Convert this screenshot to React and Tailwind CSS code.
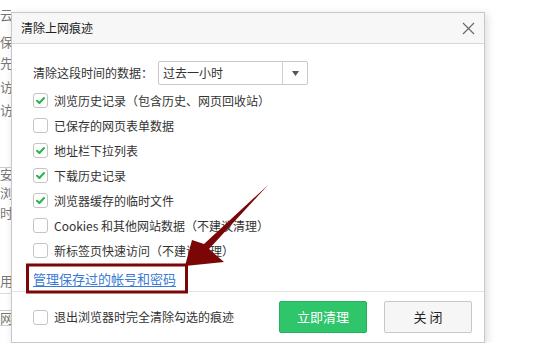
import React from 'react';

const FONT = { fontFamily: '"Noto Sans CJK SC", "Microsoft YaHei", sans-serif' };

const options = [
  { label: '浏览历史记录（包含历史、网页回收站）', checked: true },
  { label: '已保存的网页表单数据', checked: false },
  { label: '地址栏下拉列表', checked: true },
  { label: '下载历史记录', checked: true },
  { label: '浏览器缓存的临时文件', checked: true },
  { label: 'Cookies 和其他网站数据（不建议清理）', checked: false },
  { label: '新标签页快速访问（不建议清理）', checked: false },
];

const Checkbox = ({ checked }) => (
  <span className="flex items-center justify-center w-[15px] h-[15px] rounded-[3px] border border-[#c4c4c4] bg-white shrink-0">
    {checked && (
      <svg width="11" height="11" viewBox="0 0 11 11">
        <path d="M2 5.8 L4.4 8 L9 3" fill="none" stroke="#22b64c" strokeWidth="2" strokeLinecap="round" strokeLinejoin="round" />
      </svg>
    )}
  </span>
);

// background settings page: only its left edge shows beside the dialog
const bgRows = [
  { text: '云', cls: 'mt-[5px]' },
  { text: '保', cls: 'mt-[7px]' },
  { text: '先', cls: 'mt-[1px]' },
  { text: '访', cls: 'mt-[4px]' },
  { text: '访', cls: 'mt-[3px]' },
];

export default function App() {
  return (
    <div className="relative w-[536px] h-[343px] overflow-hidden bg-white text-[12px] text-[#333]" style={FONT}>
      {/* background page */}
      <div className="flex flex-col w-[11px] overflow-hidden text-[13px] text-[#777]">
        {bgRows.map((r, i) => (
          <div key={i} className={`h-[20px] flex items-center ${r.cls}`}>{r.text}</div>
        ))}
        <div className="h-[14px] mt-[47px] border-y border-[#ccc] flex items-center">安</div>
        <div className="h-[20px] mt-[2px] flex items-center">浏</div>
        <div className="h-[20px] flex items-center">时</div>
        <div className="h-[20px] mt-[48px] flex items-center">用</div>
        <div className="h-px bg-[#ddd] mt-[2px]" />
        <div className="h-[16px] mt-[16px] border-y border-[#ccc] flex items-center">网</div>
      </div>

      {/* dialog */}
      <div className="absolute left-[11px] top-[12px] w-[474px] h-[331px] bg-white border border-[#c8c8c8] shadow-[2px_2px_8px_rgba(0,0,0,0.15)] flex flex-col">
        <div className="h-[31px] shrink-0 bg-[#f7f7f7] border-b border-[#d8d8d8] flex items-center justify-between pl-[9px] pr-[9px]">
          <span className="text-[12px] text-[#222]">清除上网痕迹</span>
          <svg width="13" height="13" viewBox="0 0 13 13">
            <path d="M1 1 L12 12 M12 1 L1 12" stroke="#666" strokeWidth="1.1" fill="none" />
          </svg>
        </div>

        <div className="flex flex-col pl-[21px] pt-[17px]">
          <div className="flex items-center h-[24px]">
            <span className="w-[125px]">清除这段时间的数据：</span>
            <div className="flex h-[24px] w-[150px] border border-[#c8c8c8] rounded-[2px]">
              <span className="flex-1 flex items-center pl-[4px] text-[12px]">过去一小时</span>
              <span className="w-[25px] border-l border-[#d0d0d0] flex items-center justify-center">
                <svg width="7" height="5" viewBox="0 0 7 5"><path d="M0 0 H7 L3.5 5 Z" fill="#555" /></svg>
              </span>
            </div>
          </div>

          <div className="flex flex-col mt-[3px]">
            {options.map((o, i) => (
              <label key={i} className="flex items-center h-[25px] gap-[6px]">
                <Checkbox checked={o.checked} />
                <span>{o.label}</span>
              </label>
            ))}
          </div>

          <div className="h-[25px] mt-[3px] flex items-center">
            <span className="text-[13px] text-[#3a7bd5] underline underline-offset-2">管理保存过的帐号和密码</span>
          </div>
        </div>

        <div className="border-t border-[#e2e2e2] flex items-center pl-[21px] pr-[12px] pt-[9px] pb-[7px]">
          <label className="flex items-center gap-[6px] flex-1">
            <Checkbox checked={false} />
            <span>退出浏览器时完全清除勾选的痕迹</span>
          </label>
          <button className="w-[88px] h-[32px] rounded-[2px] bg-[#2ec56b] border border-[#25b05c] text-white text-[13px]">立即清理</button>
          <button className="w-[88px] h-[32px] ml-[17px] rounded-[2px] bg-[#f6f6f6] border border-[#c8c8c8] text-[#222] text-[13px]">关 闭</button>
        </div>
      </div>

      {/* annotation */}
      <svg className="absolute inset-0 pointer-events-none" width="536" height="343" viewBox="0 0 536 343">
        <rect x="27.5" y="265" width="159" height="27" fill="none" stroke="#7a0606" strokeWidth="3" />
        <polygon points="268,185 209,249 224,262 185,266 192,240 204,244" fill="#7a0606" />
      </svg>
    </div>
  );
}
